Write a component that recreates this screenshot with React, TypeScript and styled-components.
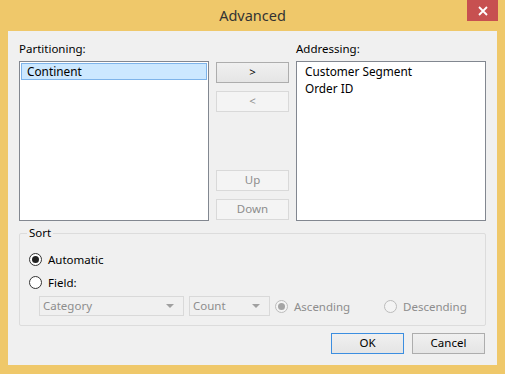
import React from "react";
import styled, { createGlobalStyle } from "styled-components";

const Global = createGlobalStyle`
  html, body { margin: 0; padding: 0; background: #fff; }
  body { font-family: "Segoe UI", "Noto Sans", "Open Sans", sans-serif; font-size: 11.5px; color: #000; }
  * { box-sizing: border-box; }
`;

const Window = styled.div`
  width: 505px;
  height: 374px;
  background: #efc86a;
  display: flex;
  flex-direction: column;
  padding: 0 8px 9px 8px;
`;

const TitleBar = styled.div`
  position: relative;
  height: 31px;
  display: flex;
  align-items: center;
  justify-content: center;
  padding-bottom: 2px;
`;

const Title = styled.div`
  font-size: 14.5px;
  color: #333;
`;

const CloseButton = styled.div`
  position: absolute;
  top: 0;
  right: -1px;
  width: 31px;
  height: 21px;
  background: #c75050;
  display: flex;
  align-items: center;
  justify-content: center;
`;

const Content = styled.div`
  flex: 1;
  background: #f0f0f0;
  padding: 10px 11px 11px 11px;
  display: flex;
  flex-direction: column;
`;

const TopGrid = styled.div`
  display: grid;
  grid-template-columns: 190px 1fr 190px;
  grid-template-rows: 20px 160px;
`;

const Label = styled.div`
  line-height: 16px;
  height: 20px;
  color: #000;
`;

const ListBox = styled.div`
  background: #fff;
  border: 1px solid #828790;
  padding: 1px;
  display: flex;
  flex-direction: column;
`;

const ListItem = styled.div<{ $selected?: boolean }>`
  height: 17px;
  line-height: 15px;
  padding-left: ${(p) => (p.$selected ? "5px" : "6px")};
  border: ${(p) => (p.$selected ? "1px solid #7eb4ea" : "none")};
  background: ${(p) => (p.$selected ? "#cce8ff" : "transparent")};
  white-space: nowrap;
  font-size: 11.8px;
  ${(p) => (!p.$selected ? "padding-top: 1px; padding-left: 7px;" : "")}
`;

const MoveColumn = styled.div`
  display: flex;
  flex-direction: column;
  justify-content: space-between;
  align-items: center;
  padding: 1px 0;
`;

const ButtonGroup = styled.div`
  display: flex;
  flex-direction: column;
  gap: 8px;
`;

const Button = styled.div<{ $disabled?: boolean; $default?: boolean }>`
  width: 73px;
  height: 21px;
  display: flex;
  align-items: center;
  justify-content: center;
  line-height: 1;
  padding-bottom: 1px;
  color: ${(p) => (p.$disabled ? "#8d8d8d" : "#000")};
  border: 1px solid
    ${(p) => (p.$default ? "#3c8ee0" : p.$disabled ? "#d9d9d9" : "#adadad")};
  background: ${(p) =>
    p.$disabled ? "#f4f4f4" : "linear-gradient(#f0f0f0, #e5e5e5)"};
`;

const Group = styled.fieldset`
  margin: 4px 0 0 0;
  padding: 8px 10px 9px 9px;
  border: 1px solid #dcdcdc;
  border-radius: 2px;
  min-width: 0;
  display: flex;
  flex-direction: column;
`;

const Legend = styled.legend`
  padding: 0 2px;
  margin-left: -2px;
  line-height: 16px;
  color: #000;
`;

const RadioRow = styled.div<{ $width?: number; $disabled?: boolean }>`
  display: flex;
  align-items: center;
  height: 20px;
  gap: 6px;
  color: ${(p) => (p.$disabled ? "#8d8d8d" : "#000")};
  ${(p) => (p.$width ? `width: ${p.$width}px; flex: none;` : "")}
`;

const RadioStack = styled.div`
  display: flex;
  flex-direction: column;
  gap: 3px;
`;

const RadioCircle = styled.span<{ $checked?: boolean; $disabled?: boolean }>`
  width: 13px;
  height: 13px;
  border-radius: 50%;
  flex: none;
  border: 1px solid ${(p) => (p.$disabled ? "#bcbcbc" : "#333")};
  background: ${(p) => (p.$disabled ? "#f4f4f4" : "#fff")};
  display: flex;
  align-items: center;
  justify-content: center;
  &::after {
    content: "";
    display: ${(p) => (p.$checked ? "block" : "none")};
    width: 7px;
    height: 7px;
    border-radius: 50%;
    background: ${(p) => (p.$disabled ? "#a5a5a5" : "#222")};
  }
`;

const FieldRow = styled.div`
  display: flex;
  align-items: center;
  gap: 5px;
  margin-top: 4px;
  padding-left: 10px;
`;

const Combo = styled.div<{ $width: number }>`
  width: ${(p) => p.$width}px;
  height: 20px;
  border: 1px solid #d9d9d9;
  background: #f0f0f0;
  color: #8d8d8d;
  display: flex;
  align-items: center;
  justify-content: space-between;
  padding: 0 9px 1px 3px;
  flex: none;
`;

const Arrow = styled.span`
  width: 0;
  height: 0;
  border-left: 4px solid transparent;
  border-right: 4px solid transparent;
  border-top: 4px solid #a0a0a0;
  margin-top: 1px;
`;

const Footer = styled.div`
  display: flex;
  justify-content: flex-end;
  gap: 8px;
  margin-top: 7px;
  padding-right: 1px;
`;

export default function App() {
  return (
    <>
      <Global />
      <Window>
        <TitleBar>
          <Title>Advanced</Title>
          <CloseButton>
            <svg width="10" height="10" viewBox="0 0 10 10">
              <path d="M1 1 L9 9 M9 1 L1 9" stroke="#fff" strokeWidth="1.8" />
            </svg>
          </CloseButton>
        </TitleBar>
        <Content>
          <TopGrid>
            <Label>Partitioning:</Label>
            <div />
            <Label>Addressing:</Label>
            <ListBox>
              <ListItem $selected>Continent</ListItem>
            </ListBox>
            <MoveColumn>
              <ButtonGroup>
                <Button>&gt;</Button>
                <Button $disabled>&lt;</Button>
              </ButtonGroup>
              <ButtonGroup>
                <Button $disabled>Up</Button>
                <Button $disabled>Down</Button>
              </ButtonGroup>
            </MoveColumn>
            <ListBox>
              <ListItem>Customer Segment</ListItem>
              <ListItem>Order ID</ListItem>
            </ListBox>
          </TopGrid>
          <Group>
            <Legend>Sort</Legend>
            <RadioStack>
              <RadioRow>
                <RadioCircle $checked />
                <span>Automatic</span>
              </RadioRow>
              <RadioRow>
                <RadioCircle />
                <span>Field:</span>
              </RadioRow>
            </RadioStack>
            <FieldRow>
              <Combo $width={145}>
                <span>Category</span>
                <Arrow />
              </Combo>
              <Combo $width={81}>
                <span>Count</span>
                <Arrow />
              </Combo>
              <RadioRow $width={104} $disabled>
                <RadioCircle $checked $disabled />
                <span>Ascending</span>
              </RadioRow>
              <RadioRow $disabled>
                <RadioCircle $disabled />
                <span>Descending</span>
              </RadioRow>
            </FieldRow>
          </Group>
          <Footer>
            <Button $default>OK</Button>
            <Button>Cancel</Button>
          </Footer>
        </Content>
      </Window>
    </>
  );
}
